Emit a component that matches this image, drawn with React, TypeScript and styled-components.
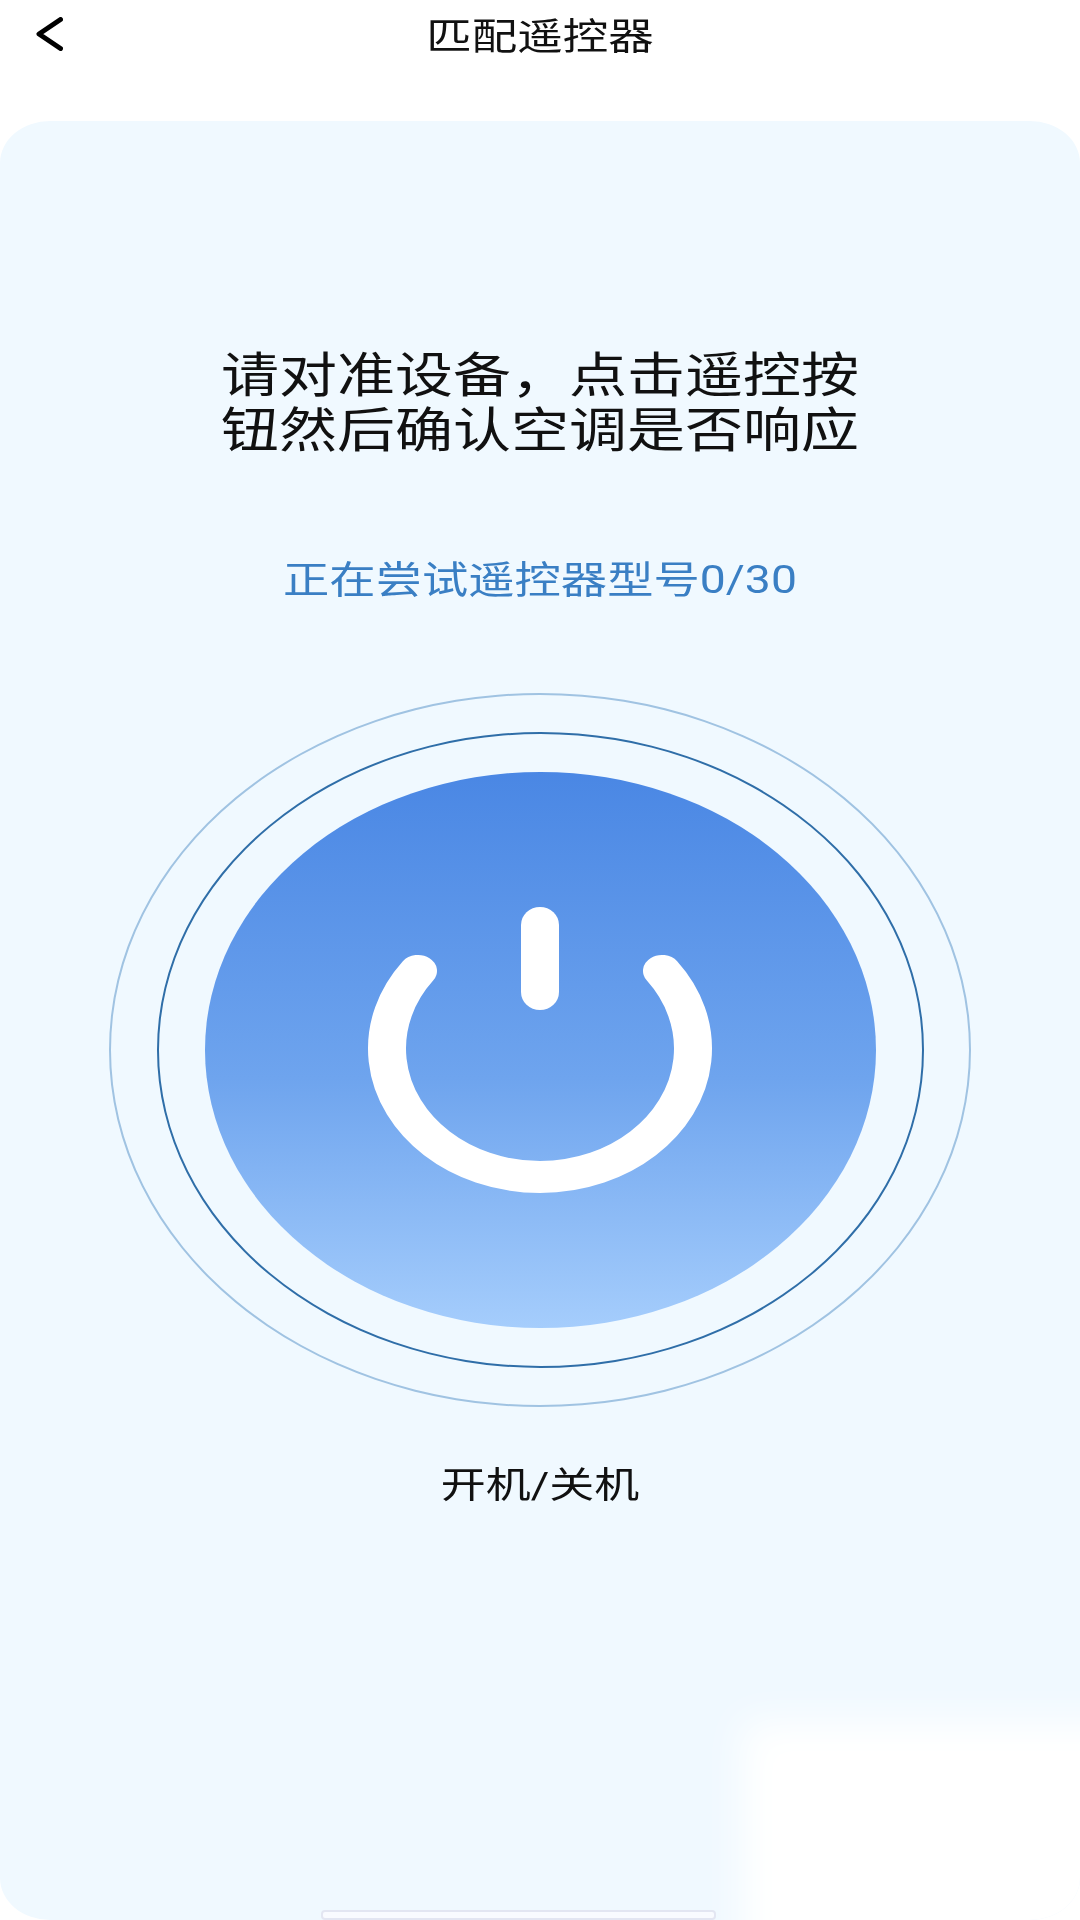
import styled, { createGlobalStyle } from 'styled-components';

const GlobalStyle = createGlobalStyle`
  html, body {
    margin: 0;
    padding: 0;
    background: #ffffff;
  }
  body {
    font-family: Roboto, "Noto Sans CJK SC", "Noto Sans", sans-serif;
  }
`;

function BackIcon() {
  return (
    <svg width="27" height="34" viewBox="0 0 27 34" fill="none">
      <path
        d="M24.5 2.5 L3 17 L24.5 31.5"
        stroke="#000000"
        strokeWidth="5"
        strokeLinecap="round"
        strokeLinejoin="round"
      />
    </svg>
  );
}

function PowerIcon() {
  return (
    <svg width="346" height="287" viewBox="0 0 346 287" fill="none">
      <g transform="translate(173 142) scale(1 0.84)">
        <path
          d="M-122 -93 A153 153 0 1 0 122 -93"
          stroke="#ffffff"
          strokeWidth="38"
          strokeLinecap="round"
        />
      </g>
      <rect x="154" y="0" width="38" height="103" rx="19" ry="18" fill="#ffffff" />
    </svg>
  );
}

export default function App() {
  return (
    <>
      <GlobalStyle />
      <Page>
        <Header>
          <BackButton>
            <BackIcon />
          </BackButton>
          <HeaderTitle>匹配遥控器</HeaderTitle>
        </Header>
        <Panel>
          <Heading>
            {'请对准设备\uFF0C点击遥控按'}
            <br />
            钮然后确认空调是否响应
          </Heading>
          <Status>正在尝试遥控器型号0/30</Status>
          <OuterRing>
            <InnerRing>
              <PowerButton>
                <PowerIcon />
              </PowerButton>
            </InnerRing>
          </OuterRing>
          <Caption>开机/关机</Caption>
          <WhitePatch />
          <HomeBar />
        </Panel>
      </Page>
    </>
  );
}

const Page = styled.div`
  width: 1080px;
  height: 1920px;
  display: flex;
  flex-direction: column;
  background: #ffffff;
  overflow: hidden;
`;

const Header = styled.header`
  position: relative;
  height: 121px;
  flex: none;
  display: flex;
  justify-content: center;
  padding-top: 14px;
  box-sizing: border-box;
`;

const BackButton = styled.div`
  position: absolute;
  left: 36px;
  top: 17px;
  line-height: 0;
`;

const HeaderTitle = styled.h1`
  margin: 0;
  height: 48px;
  font-size: 45.5px;
  line-height: 48px;
  font-weight: 400;
  color: #111111;
  transform: scaleY(0.82);
`;

const Panel = styled.main`
  position: relative;
  flex: 1;
  display: flex;
  flex-direction: column;
  align-items: center;
  padding-top: 214px;
  background: #f0f9ff;
  border-radius: 50px / 42px;
  overflow: hidden;
`;

const Heading = styled.h2`
  margin: 0;
  font-size: 58px;
  line-height: 68px;
  font-weight: 400;
  color: #111111;
  text-align: center;
  white-space: nowrap;
  transform: scaleY(0.82);
`;

const Status = styled.p`
  margin: 81px 0 0;
  font-size: 46.3px;
  line-height: 56px;
  color: #3a7fc4;
  white-space: nowrap;
  transform: scaleY(0.82);
`;

const OuterRing = styled.div`
  width: 862px;
  height: 714px;
  margin-top: 85px;
  flex: none;
  display: flex;
  align-items: center;
  justify-content: center;
  box-sizing: border-box;
  border: 2px solid #a0c3e2;
  border-radius: 50%;
`;

const InnerRing = styled.div`
  width: 767px;
  height: 636px;
  display: flex;
  align-items: center;
  justify-content: center;
  box-sizing: border-box;
  border: 2px solid #2f6ea8;
  border-radius: 50%;
`;

const PowerButton = styled.div`
  width: 671px;
  height: 556px;
  display: flex;
  align-items: center;
  justify-content: center;
  border-radius: 50%;
  background: linear-gradient(180deg, #4a87e4 0%, #6ea4ee 55%, #a5cdfc 100%);
`;

const Caption = styled.p`
  margin: 51px 0 0;
  font-size: 45px;
  line-height: 56px;
  color: #111111;
  white-space: nowrap;
  transform: scaleY(0.82);
`;

const WhitePatch = styled.div`
  position: absolute;
  left: 742px;
  top: 1600px;
  width: 420px;
  height: 300px;
  background: #ffffff;
  filter: blur(20px);
`;

const HomeBar = styled.div`
  position: absolute;
  left: 321px;
  bottom: 0;
  width: 395px;
  height: 10px;
  box-sizing: border-box;
  background: #f9fbff;
  border: 2px solid #e3e6f2;
  border-radius: 4px;
`;
